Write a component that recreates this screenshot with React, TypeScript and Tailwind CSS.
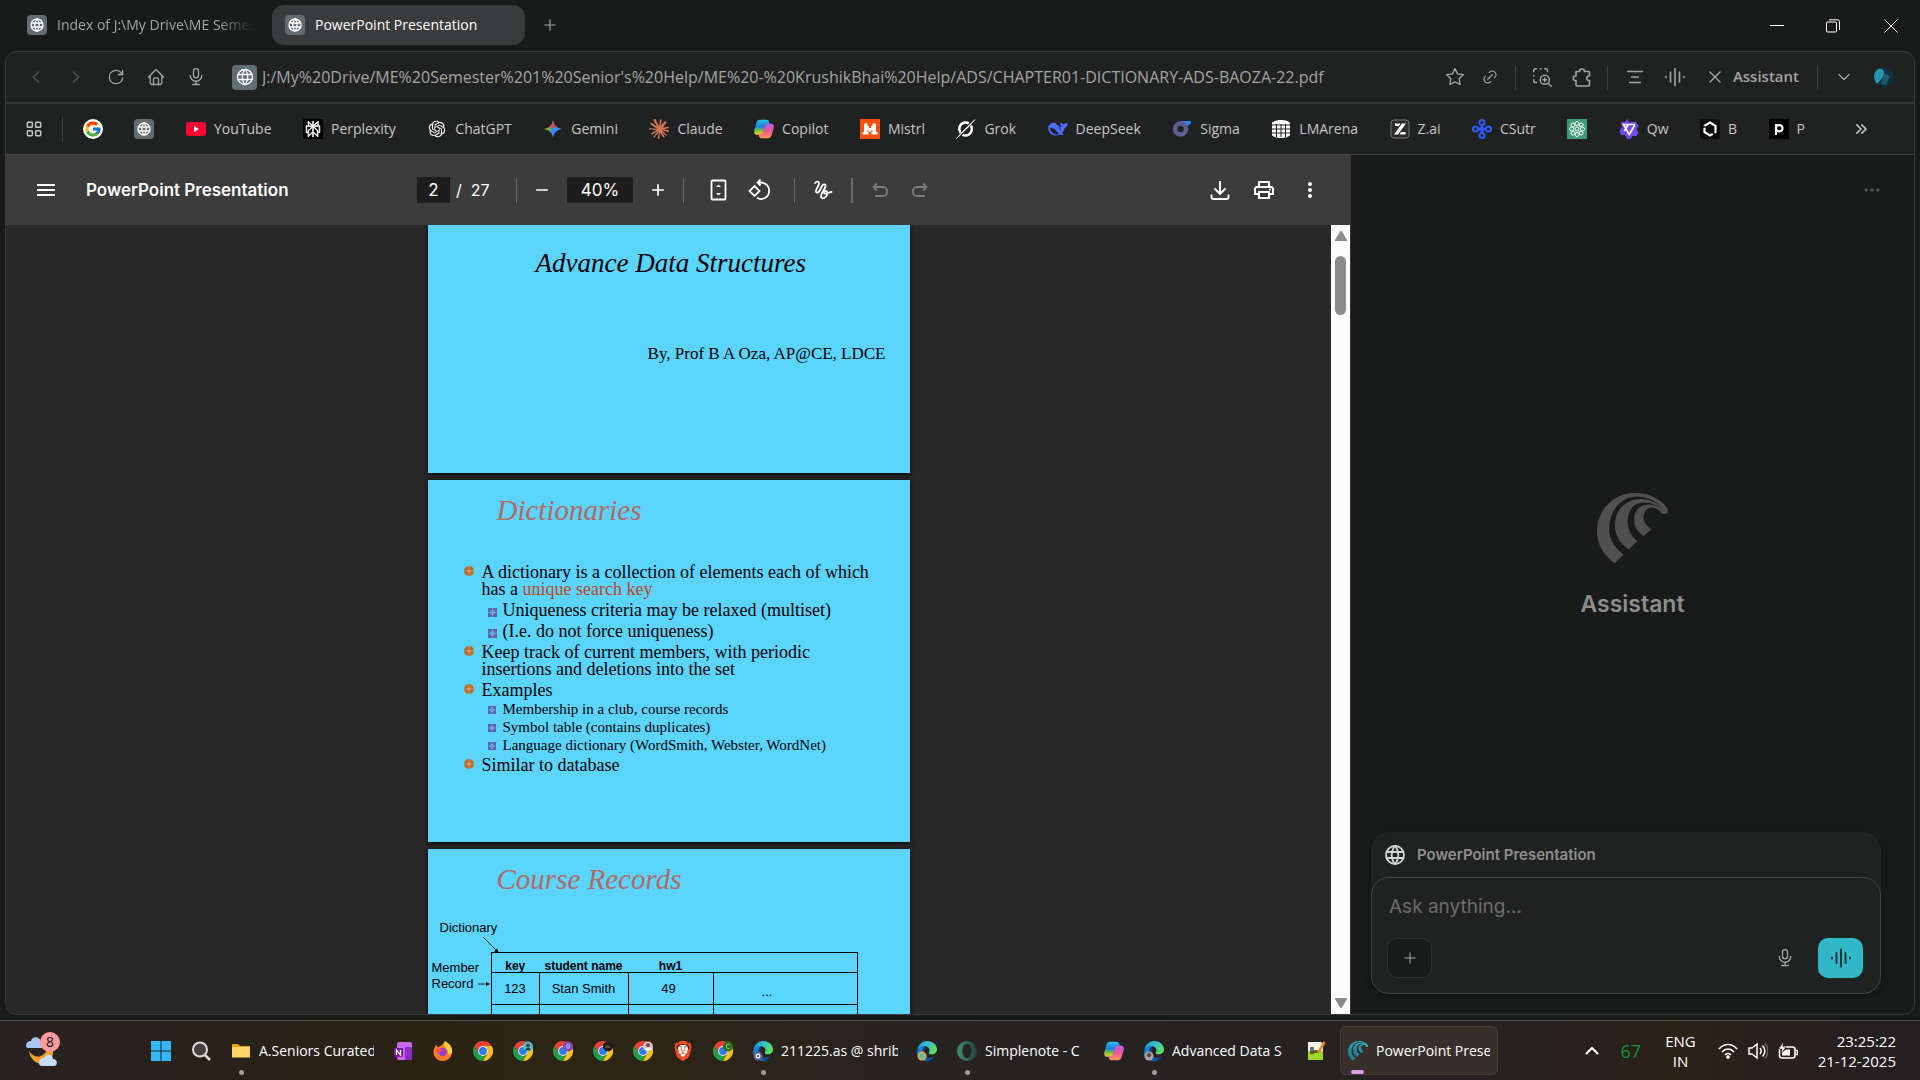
import type { ReactNode } from "react";
import { clsx } from "clsx";
import { FcGoogle } from "react-icons/fc";
import { MdAdd, MdMenu, MdMoreVert, MdOutlinePrint, MdRemove } from "react-icons/md";
import { RiOpenaiFill } from "react-icons/ri";
import { SiBrave, SiClaude, SiPerplexity } from "react-icons/si";
import {
  TbChevronDown, TbChevronLeft, TbChevronRight, TbChevronsRight, TbDots, TbHome, TbLayoutGrid, TbLink,
  TbMicrophone, TbPlus, TbReload, TbStar, TbWorld, TbX, TbZoomInArea,
} from "react-icons/tb";

const UI = "font-['Open_Sans','Noto_Sans',sans-serif]";
const GROTESK = "font-['Inter','Liberation_Sans',sans-serif]";
const SERIF = "font-['Liberation_Serif',serif]";
const ARIAL = "font-['Liberation_Sans',sans-serif]";

function GlobeTile({ size = "size-5" }: { size?: string }) {
  return (
    <span className={clsx(size, "flex shrink-0 items-center justify-center rounded bg-[#626c73] text-white")}>
      <TbWorld className="size-4/5" strokeWidth={2} />
    </span>
  );
}

function Wave({ className }: { className?: string }) {
  return (
    <svg viewBox="0 0 20 20" className={className} stroke="currentColor" strokeWidth="1.8" strokeLinecap="round" fill="none">
      <path d="M1 9.500v1M5.500 5v10M10 1.500v17M14.500 5v10M19 9.500v1" />
    </svg>
  );
}

function CometMark({ className, fill = "currentColor" }: { className?: string; fill?: string }) {
  return (
    <svg viewBox="0 0 71 71" className={className} fill={fill}>
      <defs>
        <linearGradient id="comet" x1="0" y1="1" x2="1" y2="0">
          <stop offset="0" stopColor="#1d6f86" />
          <stop offset="1" stopColor="#39c6d8" />
        </linearGradient>
      </defs>
      <path d="M17.8 70.4C6 62 0 50 0 39 0 16 17 0 38 0c15 0 25 6 31.500 14 2.500 3 1.500 7-2 7-1.500 0-2.500-1-3.500-2l.5-5C58 7 49 3.500 40 3.500 24 3.500 12.200 18 12.200 36c0 11 5.800 19 14.400 25.400z" />
      <path d="M31.800 56.400C22 50 17.800 41 17.800 32 17.800 17 29 6 43.700 6 52 6 59 9 65 14.500l-.5 1C59 11.500 53 9.600 47 9.600 37 9.600 30.700 17 30.700 28c0 9 3.300 15 9.600 19.900z" />
      <path d="M46.600 43.200C40 38.500 37 33 37 26.800c0-9.300 6-15.400 14.500-15.400 5.500 0 9.500 1.600 13.500 4.600l3 5c-1 0-3-.5-4-1.500-2.500-3-5.500-4.900-9-4.900-5 0-8.400 3.900-8.400 9.900 0 5 2.900 8.500 7.800 11.600z" />
    </svg>
  );
}

function CopilotMark({ className }: { className?: string }) {
  return (
    <svg viewBox="0 0 24 24" className={className}>
      <defs>
        <linearGradient id="cpA" x1="0" y1="0" x2="0" y2="1">
          <stop offset="0" stopColor="#2cc3e8" /><stop offset=".45" stopColor="#1d7fe0" />
          <stop offset=".7" stopColor="#6fc04c" /><stop offset="1" stopColor="#f7d21e" />
        </linearGradient>
        <linearGradient id="cpB" x1="0" y1="0" x2="0" y2="1">
          <stop offset="0" stopColor="#b45ce8" /><stop offset=".5" stopColor="#f0569a" /><stop offset="1" stopColor="#ff9a5a" />
        </linearGradient>
      </defs>
      <path d="M7 1h8c2 0 2.600 1 3.200 3l.8 2.500h-3c-1.500 0-2.200.8-2.600 2L11 16c-.7 2-1.500 3-3.500 3H4c-3 0-4.500-2-3.500-6L3 4.500C3.800 2 5 1 7 1z" fill="url(#cpA)" />
      <path d="M17 23H9c-2 0-2.600-1-3.200-3L5 18h3c1.500 0 2.200-.8 2.600-2L13 8.500c.7-2 1.500-3 3.500-3H20c3 0 4.500 2 3.500 6L21 19.500c-.8 2.500-2 3.500-4 3.500z" fill="url(#cpB)" />
    </svg>
  );
}

function ChromeMark({ badge }: { badge?: ReactNode }) {
  return (
    <svg viewBox="0 0 48 48" className="size-5">
      <path d="M24 12h20.800A24 24 0 0 0 3.200 12l10.400 18A12 12 0 0 1 24 12z" fill="#ea4335" />
      <path d="M13.600 30 3.200 12A24 24 0 0 0 24 48l10.400-18a12 12 0 0 1-20.800 0z" fill="#1f9d48" />
      <path d="M34.400 30 24 48a24 24 0 0 0 20.800-36H24a12 12 0 0 1 10.400 18z" fill="#fbc116" />
      <circle cx="24" cy="24" r="12" fill="#fff" />
      <circle cx="24" cy="24" r="9.500" fill="#2f7bea" />
      {badge}
    </svg>
  );
}

function EdgeMark({ badge }: { badge?: ReactNode }) {
  return (
    <svg viewBox="0 0 24 24" className="size-5 shrink-0">
      <defs>
        <linearGradient id="edgeTop" x1="0" y1=".2" x2="1" y2=".6">
          <stop offset="0" stopColor="#1b9de2" /><stop offset=".5" stopColor="#35c1c9" /><stop offset="1" stopColor="#66e04f" />
        </linearGradient>
      </defs>
      <path d="M1 11C1 5 6 5 10 7c-3 1-4 4-4 7 0 6 6 9 10 9-1 .7-2.500 1-4 1C5 24 0 19 0 13z" fill="#1382d6" />
      <path d="M10 8c-2 2-2 6 0 9s7 4 11 1c-2 4-5 6-8 5.500-4 0-7.500-4-7.500-8C5.500 12 7 9 10 8z" fill="#0c4f9c" />
      <path d="M.5 11C1.500 4 7 0 12 0c7 0 12 5 12 10 0 4-3 6-6 6s-4-1-4-2 1-1 1-3c0-3-3-5-7-5-4 0-6.500 2-7.500 5z" fill="url(#edgeTop)" />
      {badge}
    </svg>
  );
}

const marks = {
  youtube: (
    <svg viewBox="0 0 20 20" className="size-5"><rect y="3" width="20" height="14" rx="3" fill="#ff0033" /><path d="M8 7v6l5-3z" fill="#fff" /></svg>
  ),
  perplexity: <span className="flex size-5 items-center justify-center bg-black text-white"><SiPerplexity className="size-4" stroke="#fff" strokeWidth={1} /></span>,
  gemini: (
    <svg viewBox="0 0 20 20" className="size-5">
      <defs>
        <linearGradient id="gem" x1="0" y1=".4" x2="1" y2=".5">
          <stop offset="0" stopColor="#f5c51c" /><stop offset=".35" stopColor="#4aa86a" /><stop offset=".5" stopColor="#3f86f5" /><stop offset="1" stopColor="#4a8af8" />
        </linearGradient>
      </defs>
      <path d="M10 1c.8 5 3.500 8.200 9 9-5.500.8-8.200 4-9 9-.8-5-3.500-8.200-9-9 5.500-.8 8.200-4 9-9z" fill="url(#gem)" />
      <path d="M10 1c.6 3.500 1.800 5.500 3.600 7L10 9 6.400 8C8.200 6.500 9.400 4.500 10 1z" fill="#ea4335" opacity=".85" />
    </svg>
  ),
  mistral: (
    <svg viewBox="0 0 20 20" className="size-5"><rect width="20" height="20" fill="#fa500f" /><path d="M4 4.500h3.500V7H9v2h2V7h1.500V4.500H16v8.500h1.500v2.500h-6V13h1v-1.500H11V13H9v-1.500H7.500V13h1v2.500h-6V13H4z" fill="#fff" /></svg>
  ),
  grok: (
    <svg viewBox="0 0 20 20" className="size-5" fill="none" stroke="#fff">
      <path d="M15 6.500c2.500 5-1 10-5.500 10-1.200 0-2.200-.3-3-.8M4.500 14C1.500 9 4.500 3.500 9.500 3.500c1.300 0 2.500.4 3.300 1" strokeWidth="2.400" /><path d="M.5 19.500 6.500 12.500 19 .5 13 7.500z" fill="#fff" strokeWidth=".6" />
    </svg>
  ),
  deepseek: (
    <svg viewBox="0 0 20 20" className="size-5" fill="#4d6bfe">
      <path d="M.3 9.500C.3 5.500 3 3.500 6 4l1.500-.5c0 1 .8 1.700 2 2.500l3 2.500c.8 0 .8-1.500 0-3-.4-1 0-2 .8-2.300.4 1.300 1.300 2 2.700 1.700 1-.6 2.500-1 3.700-1.200 0 3-1.200 4.800-3.200 5.600-.3 2-1 3.500-2.300 4.700l1.500 1.500c-1.500.8-3 .7-4.200 0C6 18 .3 15 .3 9.500z" />
      <path d="M2.500 9c3-.5 5 1.500 8 6-3 1-8-1.500-8-6zM10.500 8.500c1.200 0 2 .8 2 2" fill="#202222" stroke="#202222" strokeWidth=".5" />
    </svg>
  ),
  sigma: (
    <svg viewBox="0 0 20 20" className="size-5"><path d="M8 2h11c0 3-1.500 4.500-4 4.500z" fill="#3b82f6" /><circle cx="8.500" cy="10" r="5.500" fill="none" stroke="#5b5e93" strokeWidth="4.500" /></svg>
  ),
  lmarena: (
    <svg viewBox="0 0 20 20" className="size-5"><path d="M1 4c2-4 16-4 18 0v12c-2 4-16 4-18 0z" fill="#fff" /><path d="M1 6h18M1 10h18M1 14h18M5.500 5v13M10 5v13M14.500 5v13" stroke="#202222" strokeWidth="1" /></svg>
  ),
  zai: (
    <svg viewBox="0 0 20 20" className="size-5"><rect x="1" y="1" width="18" height="18" rx="3" fill="#2d2d2d" stroke="#777" /><path d="M5 4.500h5.500L9 7H5zM16 4.500 8 15.500H4l8-11zM15.500 15.500h-6L11 13h4.500z" fill="#fff" /></svg>
  ),
  csutr: (
    <svg viewBox="0 0 20 20" className="size-5" fill="none" stroke="#2f5bff" strokeWidth="2">
      <circle cx="10" cy="3.500" r="2.500" /><circle cx="10" cy="16.500" r="2.500" /><circle cx="3.500" cy="10" r="2.500" /><circle cx="16.500" cy="10" r="2.500" />
      <path d="M10 6c0 2.500-1.500 4-4 4 2.500 0 4 1.500 4 4 0-2.500 1.500-4 4-4-2.500 0-4-1.500-4-4z" />
    </svg>
  ),
  atom: (
    <svg viewBox="0 0 20 20" className="size-5"><rect width="20" height="20" fill="#3d9c78" />
      <g fill="none" stroke="#fff" strokeWidth="1">
        <circle cx="10" cy="4.500" r="2" /><circle cx="10" cy="15.500" r="2" /><circle cx="4.500" cy="10" r="2" /><circle cx="15.500" cy="10" r="2" />
        <circle cx="6" cy="6" r="2" /><circle cx="14" cy="6" r="2" /><circle cx="6" cy="14" r="2" /><circle cx="14" cy="14" r="2" /><circle cx="10" cy="10" r="2" />
      </g>
    </svg>
  ),
  qwen: (
    <svg viewBox="0 0 20 20" className="size-5"><path d="m8 0 2 3h7l2.500 4-2 3 2 4-2 3h-4l-2 3H8l-2-4H2L.5 12l3-5-2-3 2-1h3z" fill="#6c4df2" /><path d="M3.500 5.500h12.500M4.500 5.500l6 10.500M15.500 6.500l-5.500 9.500M5.500 12 9 6" fill="none" stroke="#fff" strokeWidth="1.600" /></svg>
  ),
  hex: (
    <svg viewBox="0 0 20 20" className="size-5"><rect width="20" height="20" rx="3" fill="#0c0c0c" /><path d="m10 3.500 5.500 3.300v6.400L10 16.500l-5.500-3.300V6.800z" fill="none" stroke="#fff" strokeWidth="2.200" strokeDasharray="14 2" /></svg>
  ),
  pmark: (
    <svg viewBox="0 0 20 20" className="size-5"><rect width="20" height="20" fill="#000" /><path d="M7 16V5M7 9c0-4 6.500-4 6.500.3s-6.500 4-6.500 0" fill="none" stroke="#fff" strokeWidth="2.200" /></svg>
  ),
};

const bookmarks: { label?: string; title?: string; icon: ReactNode }[] = [
  { title: "Google", icon: <span className="flex size-5 items-center justify-center rounded-full bg-white"><FcGoogle className="size-[18px]" /></span> },
  { title: "Site", icon: <GlobeTile /> },
  { label: "YouTube", icon: marks.youtube },
  { label: "Perplexity", icon: marks.perplexity },
  { label: "ChatGPT", icon: <RiOpenaiFill className="size-5 text-white" /> },
  { label: "Gemini", icon: marks.gemini },
  { label: "Claude", icon: <SiClaude className="size-5 text-[#d97757]" /> },
  { label: "Copilot", icon: <CopilotMark className="size-5" /> },
  { label: "Mistrl", icon: marks.mistral },
  { label: "Grok", icon: marks.grok },
  { label: "DeepSeek", icon: marks.deepseek },
  { label: "Sigma", icon: marks.sigma },
  { label: "LMArena", icon: marks.lmarena },
  { label: "Z.ai", icon: marks.zai },
  { label: "CSutr", icon: marks.csutr },
  { title: "Atom", icon: marks.atom },
  { label: "Qw", icon: marks.qwen },
  { label: "B", icon: marks.hex },
  { label: "P", icon: marks.pmark },
];

function TabStrip() {
  return (
    <header className="flex h-[51px] shrink-0 items-center">
      <div role="tablist" className="flex items-center pb-px">
        <button role="tab" aria-selected={false} className="ml-[14px] flex h-10 w-[252px] items-center gap-[10px] rounded-xl px-[13px] text-[#a3a5a5]">
          <GlobeTile />
          <span className="flex-1 overflow-hidden text-left whitespace-nowrap [mask-image:linear-gradient(to_right,#000_82%,transparent)]">Index of J:\My Drive\ME Semester</span>
        </button>
        <button role="tab" aria-selected className="ml-[6px] flex h-10 w-[253px] items-center gap-[10px] rounded-xl bg-[#393b3c] px-[13px] text-white">
          <GlobeTile />
          <span>PowerPoint Presentation</span>
        </button>
        <button aria-label="New tab" className="ml-4 text-[#a3a5a5]"><TbPlus className="size-[18px]" strokeWidth={1.5} /></button>
      </div>
      <div className="ml-auto flex text-white">
        <button aria-label="Minimize" className="flex w-14 justify-center"><svg viewBox="0 0 14 14" className="size-[14px]" stroke="currentColor"><path d="M0 6.500h14" /></svg></button>
        <button aria-label="Restore" className="flex w-14 justify-center"><svg viewBox="0 0 14 14" className="size-[14px]" stroke="currentColor" fill="none"><rect x=".5" y="3" width="10" height="10" rx="1" /><path d="M3 .8h8.500a2 2 0 0 1 2 2V11" /></svg></button>
        <button aria-label="Close" className="flex w-[59px] justify-center"><svg viewBox="0 0 14 14" className="size-[14px]" stroke="currentColor"><path d="m.5.5 13 13M13.500.5l-13 13" /></svg></button>
      </div>
    </header>
  );
}

function ToolButton({ label, dim, children }: { label: string; dim?: boolean; children: ReactNode }) {
  return (
    <button aria-label={label} className={clsx("flex h-10 w-10 shrink-0 items-center justify-center", dim ? "text-[#555858]" : "text-[#a3a5a5]")}>
      {children}
    </button>
  );
}

const Divider = () => <span className="h-[25px] w-px shrink-0 bg-[#3f4141]" />;

function AddressBar() {
  return (
    <div className="flex h-[52px] shrink-0 items-center border-b-2 border-[#383a3a] pl-[10px] [&_svg]:[stroke-width:1.6]">
      <ToolButton label="Back" dim><TbChevronLeft className="size-5" /></ToolButton>
      <ToolButton label="Forward" dim><TbChevronRight className="size-5" /></ToolButton>
      <ToolButton label="Reload"><TbReload className="size-5" /></ToolButton>
      <ToolButton label="Home"><TbHome className="size-5" /></ToolButton>
      <ToolButton label="Voice"><TbMicrophone className="size-5" /></ToolButton>
      <div className="ml-4 flex min-w-0 flex-1 items-center gap-[5px]">
        <GlobeTile size="size-[25px]" />
        <input aria-label="Address" readOnly className="min-w-0 flex-1 bg-transparent text-base text-[#a3a5a5] outline-none" value="J:/My%20Drive/ME%20Semester%201%20Senior's%20Help/ME%20-%20KrushikBhai%20Help/ADS/CHAPTER01-DICTIONARY-ADS-BAOZA-22.pdf" />
      </div>
      <div className="flex items-center gap-4 pr-4 text-[#a3a5a5]">
        <button aria-label="Bookmark"><TbStar className="size-5" /></button>
        <button aria-label="Copy link"><TbLink className="size-[18px]" /></button>
      </div>
      <Divider />
      <span className="w-[6px]" />
      <ToolButton label="Search area"><TbZoomInArea className="size-[22px]" /></ToolButton>
      <ToolButton label="Extensions">
        <svg viewBox="0 0 20 20" className="size-5" fill="none" stroke="currentColor" strokeLinejoin="round"><path d="M4 4.500h3.500a2.500 2.500 0 1 1 5 0h4a1 1 0 0 1 1 1v3.500a2.300 2.300 0 1 0 0 4.500V18a1 1 0 0 1-1 1H5a1 1 0 0 1-1-1v-4.500a2.300 2.300 0 1 1 0-4.500z" /></svg>
      </ToolButton>
      <span className="w-[5px]" />
      <Divider />
      <span className="w-[7px]" />
      <ToolButton label="Summarize"><svg viewBox="0 0 16 14" className="h-[14px] w-4" stroke="currentColor"><path d="M0 1.500h16M4 7h8M2 12.500h12" /></svg></ToolButton>
      <ToolButton label="Voice mode"><Wave className="size-5" /></ToolButton>
      <button className="flex items-center gap-2 pr-[18px] pl-[10px] text-[15px] font-semibold text-[#a3a5a5]"><TbX className="size-5" />Assistant</button>
      <Divider />
      <span className="w-[6px]" />
      <ToolButton label="More"><TbChevronDown className="size-5" /></ToolButton>
      <button aria-label="Profile" className="mr-5 ml-[10px]">
        <svg viewBox="0 0 20 20" className="size-5"><circle cx="10" cy="10" r="10" fill="#12303b" /><path d="M4 2c5-1 7 2 6 7l-7 8C-1 12-1 5 4 2z" fill="#2596ab" /><path d="m10 6 6 3-4 9-5-1z" fill="#1a5a6b" /></svg>
      </button>
    </div>
  );
}

function BookmarkBar() {
  return (
    <nav className="flex h-[51px] shrink-0 items-center border-b border-[#434545] pl-[18px] text-[#c4c6c6]">
      <button aria-label="Apps"><TbLayoutGrid className="size-5" strokeWidth={1.8} /></button>
      <span className="mr-5 ml-[18px] h-[25px] w-px bg-[#3f4141]" />
      <div className="flex flex-1 items-center justify-between">
        {bookmarks.map(b => (
          <a key={b.label ?? b.title} href="#" aria-label={b.label ?? b.title} className="flex items-center gap-2 whitespace-nowrap">
            {b.icon}{b.label && <span>{b.label}</span>}
          </a>
        ))}
      </div>
      <button aria-label="More bookmarks" className="mr-[43px] ml-[46px]"><TbChevronsRight className="size-5" /></button>
    </nav>
  );
}

const PdfDivider = () => <span className="h-[25px] w-px shrink-0 bg-[#6b6b6b]" />;

function PdfToolbar() {
  return (
    <div className={clsx("flex h-[70px] shrink-0 items-center bg-[#3c3c3c] pl-[28px] text-white", GROTESK)}>
      <button aria-label="Menu"><MdMenu className="size-6" /></button>
      <h1 className="ml-[28px] w-[331px] text-[17px] font-semibold">PowerPoint Presentation</h1>
      <input aria-label="Page" defaultValue="2" className="h-[26px] w-[33px] bg-[#1d1d1d] text-center text-[17px] outline-none" />
      <span className="ml-[6px] w-[60px] text-base">/&nbsp; 27</span>
      <PdfDivider />
      <button aria-label="Zoom out" className="flex w-[50px] justify-center"><MdRemove className="size-5" /></button>
      <input aria-label="Zoom" defaultValue="40%" className="h-[26px] w-[66px] bg-[#1d1d1d] text-center text-[17px] outline-none" />
      <button aria-label="Zoom in" className="flex w-[50px] justify-center"><MdAdd className="size-5" /></button>
      <PdfDivider />
      <div className="flex w-[110px] justify-center gap-5">
        <button aria-label="Fit to page">
          <svg viewBox="0 0 20 22" className="h-[22px] w-5" fill="none" stroke="currentColor" strokeWidth="1.800"><rect x="3.500" y="1.500" width="14" height="19" rx="1" /><path d="m8 8 2.500-2.500L13 8zM8 14l2.500 2.500L13 14z" fill="currentColor" stroke="none" /></svg>
        </button>
        <button aria-label="Rotate">
          <svg viewBox="0 0 22 22" className="size-[22px]" fill="none" stroke="currentColor" strokeWidth="1.800"><path d="m6.500 7 5 5-5 5-5-5zM9.500 3.500H13a8.200 8.200 0 0 1 0 16.500c-1.500 0-2.800-.4-4-1.200M12.500.5l-3 3 3 3" /></svg>
        </button>
      </div>
      <PdfDivider />
      <button aria-label="Draw" className="flex w-14 justify-center">
        <svg viewBox="0 0 20 20" className="size-5" fill="none" stroke="currentColor" strokeWidth="1.800" strokeLinecap="round"><path d="M2 3C3.500 1 6 1 6 3.500S2.500 9 3 11.500c.5 2 2.500 1.500 4-1.500l2-4c1.200-2.300 4-2 3.500.5-.5 3-4.500 6-4.500 9.500 0 2.800 3 3 5 .5s2-5.500-.5-5.500-2.500 2.500 0 2.500 3.500-1 6-1.500" /></svg>
      </button>
      <span className="h-[25px] w-[2px] shrink-0 bg-[#6b6b6b]" />
      <div className="ml-[17px] flex gap-5 text-[#7b7b7b]">
        <button aria-label="Undo"><svg viewBox="0 0 20 20" className="size-5" fill="none" stroke="currentColor" strokeWidth="1.800"><path d="M7 3.500 3.500 7 7 10.500M3.500 7H13a4 4 0 0 1 4 4v1a4 4 0 0 1-4 4H5" /></svg></button>
        <button aria-label="Redo"><svg viewBox="0 0 20 20" className="size-5" fill="none" stroke="currentColor" strokeWidth="1.800"><path d="M13 3.500 16.500 7 13 10.500M16.500 7H7a4 4 0 0 0-4 4v1a4 4 0 0 0 4 4h8" /></svg></button>
      </div>
      <div className="mr-[28px] ml-auto flex items-center gap-[22px]">
        <button aria-label="Download"><svg viewBox="0 0 20 20" className="size-5" fill="none" stroke="currentColor" strokeWidth="1.900"><path d="M10 1v13M4.500 8.500 10 14l5.500-5.500M1.500 14.500V17a2 2 0 0 0 2 2h13a2 2 0 0 0 2-2v-2.500" /></svg></button>
        <button aria-label="Print"><MdOutlinePrint className="size-6" /></button>
        <button aria-label="More actions"><MdMoreVert className="size-6" /></button>
      </div>
    </div>
  );
}

function Bullet({ size }: { size: "lg" | "md" | "sm" }) {
  if (size === "lg") {
    return <svg viewBox="0 0 10 10" className="mt-[2px] size-[10px] shrink-0"><circle cx="5" cy="5" r="5" fill="#c8691c" /><path d="M5 0v10M0 5h10" stroke="#5bd4ff" strokeWidth=".5" /><circle cx="5" cy="5" r="1.500" fill="#e9a45c" /></svg>;
  }
  return (
    <svg viewBox="0 0 9 9" className={clsx("shrink-0", size === "md" ? "mt-[6px] mr-[1px] size-[9px]" : "mt-[5px] mr-[2px] size-2")}>
      <rect width="9" height="9" fill="#5f63a8" /><path d="M4.500 0v9M0 4.500h9" stroke="#5bd4ff" strokeWidth=".5" /><circle cx="4.500" cy="4.500" r="1.800" fill="none" stroke="#8ed0f5" strokeWidth=".7" />
    </svg>
  );
}

function Slide({ className, children }: { className?: string; children: ReactNode }) {
  return <section className={clsx("w-[482px] shrink-0 bg-[#5bd4ff] text-black shadow-[0_1px_4px_#000]", className)}>{children}</section>;
}

function SlideTitle({ children }: { children: ReactNode }) {
  return <h2 className={clsx("ml-[69px] pt-3 text-[29px] leading-9 text-[#b46a62] italic", SERIF)}>{children}</h2>;
}

function Item({ children }: { children: ReactNode }) {
  return <li className="mt-1 flex gap-2 text-lg leading-[17px]"><Bullet size="lg" /><div className="whitespace-nowrap">{children}</div></li>;
}

function Slides() {
  return (
    <div className="flex min-w-0 flex-1 flex-col items-center gap-[7px] overflow-hidden">
      <Slide className={clsx("h-[248px]", SERIF)}>
        <h2 className="ml-[108px] pt-[22px] text-[27px] leading-8 italic">Advance Data Structures</h2>
        <p className="mt-[65px] pr-6 text-right text-[17px] leading-5">By, Prof B A Oza, AP@CE, LDCE</p>
      </Slide>
      <Slide className="h-[362px]">
        <SlideTitle>Dictionaries</SlideTitle>
        <ul className={clsx("mt-9 pr-5 pl-9", SERIF)}>
          <Item>A dictionary is a collection of elements each of which<br />has a <span className="text-[#c0451f]">unique search key</span></Item>
          {["Uniqueness criteria may be relaxed (multiset)", "(I.e. do not force uniqueness)"].map(t => (
            <li key={t} className="mt-1 ml-6 flex gap-[5px] text-lg leading-[17px]"><Bullet size="md" />{t}</li>
          ))}
          <Item>Keep track of current members, with periodic<br />insertions and deletions into the set</Item>
          <Item>Examples</Item>
          {["Membership in a club, course records", "Symbol table (contains duplicates)", "Language dictionary (WordSmith, Webster, WordNet)"].map(t => (
            <li key={t} className="mt-[2px] ml-6 flex gap-[5px] text-[15px] leading-4"><Bullet size="sm" />{t}</li>
          ))}
          <Item>Similar to database</Item>
        </ul>
      </Slide>
      <Slide className="h-[362px]">
        <SlideTitle>Course Records</SlideTitle>
        <div className={clsx("relative text-[13px] leading-4", ARIAL)}>
          <p className="pt-[23px] pl-3">Dictionary</p>
          <svg viewBox="0 0 20 18" className="absolute top-[39px] left-[54px] h-[18px] w-5"><path d="m1 1 15 15" stroke="#000" strokeWidth=".8" /><path d="m17 17-5-1.500 3-3z" /></svg>
          <div className="mt-4 flex">
            <div className="w-[63px] pt-2 pl-1">
              Member
              <div className="flex items-center gap-[5px]">Record<svg viewBox="0 0 12 6" className="h-[6px] w-3"><path d="M0 3h9" stroke="#000" strokeWidth=".8" /><path d="M12 3 8 1v4z" /></svg></div>
            </div>
            <table className="w-[367px] table-fixed border-collapse border border-black">
              <colgroup><col className="w-12" /><col className="w-[89px]" /><col className="w-[85px]" /><col /></colgroup>
              <thead>
                <tr className="h-5 text-xs leading-3"><th className="p-0 align-bottom">key</th><th className="p-0 align-bottom">student name</th><th className="p-0 align-bottom">hw1</th><th /></tr>
              </thead>
              <tbody>
                <tr className="h-8 text-center">
                  <td className="border border-black p-0">123</td><td className="border border-black p-0">Stan Smith</td><td className="border border-black p-0 pr-1">49</td><td className="border border-black p-0 pr-9 pb-1 align-bottom">...</td>
                </tr>
                <tr className="h-8"><td className="border border-black" /><td className="border border-black" /><td className="border border-black" /><td className="border border-black" /></tr>
              </tbody>
            </table>
          </div>
        </div>
      </Slide>
    </div>
  );
}

function Scrollbar() {
  return (
    <div className="flex w-[19px] shrink-0 flex-col items-center bg-[#fcfcfc] py-[6px]">
      <svg viewBox="0 0 12 10" className="h-[10px] w-3"><path d="M6 0c.5 0 1 .4 1.300 1L12 9c.2.600 0 1-.6 1H.6C0 10-.2 9.600 0 9l4.700-8C5 .4 5.500 0 6 0z" fill="#8b8b8b" /></svg>
      <div className="mt-[15px] h-[59px] w-[11px] rounded-full bg-[#8b8b8b]" />
      <svg viewBox="0 0 12 10" className="mt-auto h-[10px] w-3 rotate-180"><path d="M6 0c.5 0 1 .4 1.300 1L12 9c.2.600 0 1-.6 1H.6C0 10-.2 9.600 0 9l4.700-8C5 .4 5.500 0 6 0z" fill="#8b8b8b" /></svg>
    </div>
  );
}

function AssistantPanel() {
  return (
    <aside className={clsx("flex w-[564px] shrink-0 flex-col border-l border-[#343636] bg-[#191b1a]", GROTESK)}>
      <div className="flex h-[70px] shrink-0 items-center justify-end pr-8 text-[#555757]">
        <button aria-label="Panel menu"><TbDots className="size-5" /></button>
      </div>
      <div className="flex flex-1 flex-col items-center justify-center pt-14">
        <CometMark className="mb-6 size-[71px] text-[#50504f]" />
        <p className="text-[23px] leading-8 font-semibold text-[#8d8f8e]">Assistant</p>
      </div>
      <div className="mr-[33px] mb-5 ml-5 rounded-[18px] bg-[#202222] shadow-[0_2px_10px_#0005]">
        <div className="flex h-[45px] items-center gap-[10px] pl-3 text-[#8d8f8e]">
          <TbWorld className="size-6 text-[#d4d6d6]" strokeWidth={1.8} />
          <span className="text-[15px] font-semibold">PowerPoint Presentation</span>
        </div>
        <div className="flex flex-col rounded-[18px] border border-[#434545] p-[15px]">
          <textarea aria-label="Ask anything" rows={1} placeholder="Ask anything…" className="ml-[2px] h-[45px] resize-none bg-transparent text-[19px] leading-7 text-white outline-none placeholder:text-[#6b6d6c]" />
          <div className="flex items-center">
            <button aria-label="Attach" className="flex h-10 w-[45px] items-center justify-center rounded-[10px] border border-[#2e3030] bg-[#191b1a] text-[#a3a5a5]"><TbPlus className="size-[18px]" strokeWidth={1.4} /></button>
            <button aria-label="Dictate" className="mr-[23px] ml-auto text-[#a3a5a5]"><TbMicrophone className="size-5" strokeWidth={1.6} /></button>
            <button aria-label="Voice mode" className="mr-[2px] flex h-10 w-[45px] items-center justify-center rounded-[10px] bg-[#31b8c6] text-[#10282b]"><Wave className="size-5" /></button>
          </div>
        </div>
      </div>
    </aside>
  );
}

function TaskItem({ label, icon, width, running, active }: { label?: string; icon: ReactNode; width?: string; running?: boolean; active?: boolean }) {
  return (
    <button
      aria-label={label ?? "App"}
      className={clsx(
        "relative flex h-[49px] shrink-0 items-center",
        label ? width : "w-10 justify-center",
        active ? "mx-1 rounded-md border border-[#453d38] bg-[#37302a] px-[7px]" : label && "pr-[9px] pl-[10px]",
      )}
    >
      {icon}
      {label && <span className="ml-2 min-w-0 flex-1 overflow-hidden text-left whitespace-nowrap">{label}</span>}
      {running && <span className="absolute bottom-0 left-[18px] size-[5px] rounded-full bg-[#a0a0a0]" />}
      {active && <span className="absolute bottom-0 left-[10px] h-1 w-[13px] rounded-full bg-[#dc9fe6]" />}
    </button>
  );
}

function Taskbar() {
  return (
    <footer className="flex h-[60px] shrink-0 items-center border-t border-[#4a4746] bg-[linear-gradient(to_right,#272222,#292216_18%,#2d2413_32%,#272322_48%,#262222_80%,#2b2117_87%,#242021_98%)] text-white">
      <button aria-label="Weather" className="ml-6 w-[117px]">
        <svg viewBox="0 0 40 40" className="size-10">
          <path d="M5 20c4 6 10 8 16 2 3-4 4-8 2-12 8 5 8 16 1 21-7 4-17 1-19-11z" fill="#f0a030" />
          <path d="M2 15c0-4 3-5 5-5 1-5 9-5 10 1 3 0 4 6 0 6H4c-1 0-2-1-2-2z" fill="#a9c6f3" />
          <path d="M15 32c0-4 3-5 5-5 2-5 9-4 9 1 5 0 5 7 1 7H18c-2 0-3-1-3-3z" fill="#c8dcfb" />
          <circle cx="26" cy="11" r="10" fill="#ff99a0" />
          <text x="26" y="16" textAnchor="middle" fontSize="14" fill="#111">8</text>
        </svg>
      </button>
      <TaskItem icon={<svg viewBox="0 0 20 20" className="size-5"><path d="M0 0h9.500v9.500H0zM10.500 0H20v9.500h-9.500zM0 10.500h9.500V20H0zM10.500 10.500H20V20h-9.500z" fill="#33b8fb" /></svg>} />
      <TaskItem icon={<svg viewBox="0 0 20 20" className="size-5" fill="none" stroke="#dcdcdc" strokeWidth="2"><circle cx="9" cy="8.500" r="7" fill="#45413f" /><path d="m14 14 5 5" strokeWidth="2.500" /></svg>} />
      <TaskItem label="A.Seniors Curated" width="w-[162px]" running icon={<svg viewBox="0 0 20 20" className="size-5 shrink-0"><path d="M1 3h6l2 2h10v3H1z" fill="#e8a317" /><path d="M1 6h18v10.500H1z" fill="#ffd766" /></svg>} />
      <TaskItem icon={<svg viewBox="0 0 20 20" className="size-5"><rect x="4" y="1" width="15" height="18" rx="2" fill="#c768ea" /><path d="M12 6h7v12l-2 1h-5z" fill="#8b2fc4" /><rect x="1" y="7" width="9" height="9" rx="1" fill="#7719aa" /><path d="M3.500 14V9l4 5V9" stroke="#fff" strokeWidth="1.300" fill="none" /></svg>} />
      <TaskItem icon={<svg viewBox="0 0 20 20" className="size-5"><path d="M12 0c5 3 8 7 7 12-1 5-5 8-9 8-6 0-10-5-9.500-10C1 7 2 5 3.500 3.500c0 1 .5 2 1 2.500C7 6 9 4 12 0z" fill="#ff7a22" /><path d="M12 0c5 3 8 7 7 12l-4 2c1-5-2-7-4-9z" fill="#ffd23c" /><circle cx="9.500" cy="11" r="4.200" fill="#8a3fe0" /><path d="M3 9c2-2 4-1 7 0-1 2-4 2-5 4-1-1-2-3-2-4z" fill="#ff4a4a" /></svg>} />
      <TaskItem icon={<ChromeMark />} />
      <TaskItem icon={<ChromeMark badge={<g><circle cx="36" cy="13" r="12" fill="#46c4cf" /><circle cx="36" cy="11" r="5" fill="#6b4433" /><path d="M29 22c2-7 12-7 14 0z" fill="#2e2e33" /></g>} />} />
      <TaskItem icon={<ChromeMark badge={<g><circle cx="36" cy="13" r="12" fill="#7a50b8" /><rect x="33" y="8" width="6" height="9" rx="2" fill="none" stroke="#e0c8ff" strokeWidth="2" /></g>} />} />
      <TaskItem icon={<ChromeMark badge={<g><circle cx="36" cy="13" r="12" fill="#1d1d20" /><path d="M29 16c3-8 9-8 13 0z" fill="#76553f" /></g>} />} />
      <TaskItem icon={<ChromeMark badge={<g><circle cx="36" cy="13" r="12" fill="#dcc9cf" /><circle cx="36" cy="10" r="5" fill="#7a5145" /><path d="M28 22c2-8 14-8 16 0z" fill="#fff" /></g>} />} />
      <TaskItem icon={<span className="relative flex size-5 items-center justify-center"><span className="absolute h-3 w-[10px] rounded-sm bg-white" /><SiBrave className="relative size-5 text-[#fb4a22]" /></span>} />
      <TaskItem icon={<ChromeMark badge={<g><circle cx="36" cy="13" r="12" fill="#2e6b1f" /><path d="M40 9c-3-3-8-1-8 4s5 7 8 4" fill="none" stroke="#cfe8c4" strokeWidth="2" /></g>} />} />
      <TaskItem label="211225.as @ shribe" width="w-[164px]" running icon={<EdgeMark badge={<g><circle cx="6" cy="18" r="5.500" fill="#5b5a8f" /><circle cx="6" cy="18" r="3" fill="#fff" /><circle cx="6" cy="18" r="1.300" fill="#333" /></g>} />} />
      <TaskItem icon={<EdgeMark badge={<g><circle cx="6" cy="18" r="5.500" fill="#e3a850" /><path d="M3 15h6v6H3z" fill="#55b8a6" /></g>} />} />
      <TaskItem label="Simplenote - C" width="w-[147px]" running icon={<svg viewBox="0 0 20 20" className="size-5 shrink-0"><defs><linearGradient id="opera"><stop stopColor="#3f8f70" /><stop offset="1" stopColor="#24403e" /></linearGradient></defs><path fillRule="evenodd" d="M10 0a10 10 0 1 1 0 20 10 10 0 0 1 0-20zm0 3C4 3 4 17 10 17S16 3 10 3z" fill="url(#opera)" /></svg>} />
      <TaskItem icon={<CopilotMark className="size-5" />} />
      <TaskItem label="Advanced Data S" width="w-[162px]" running icon={<EdgeMark badge={<g><circle cx="6" cy="18" r="5.500" fill="#a9a4a2" /><circle cx="6" cy="17" r="2.500" fill="#5e4438" /></g>} />} />
      <TaskItem icon={<svg viewBox="0 0 20 20" className="size-5"><path d="M2 1h13l2 2v16H2z" fill="#f4f7e8" /><path d="M2 10h15v9H2z" fill="#9fd42a" /><path d="M5 6v7M7 6v7M9 9v3M11 9v3" stroke="#222" strokeWidth="1.300" /><path d="M18.500 1 12 12" stroke="#e98b25" strokeWidth="2.500" /></svg>} />
      <TaskItem label="PowerPoint Presentation" width="w-[158px]" active icon={<CometMark className="size-5 shrink-0" fill="url(#comet)" />} />
      <div className="mr-6 ml-auto flex items-center text-[15px]">
        <button aria-label="Hidden icons"><svg viewBox="0 0 14 9" className="h-[9px] w-[14px]" fill="none" stroke="#fff" strokeWidth="2"><path d="m1 8 6-6 6 6" /></svg></button>
        <span className="ml-[22px] text-lg text-[#17913c]">67</span>
        <span className="ml-6 text-center leading-5">ENG<br />IN</span>
        <div className="ml-[22px] flex items-center gap-[10px]">
          <svg viewBox="0 0 20 16" className="h-4 w-5" fill="none" stroke="#fff" strokeWidth="1.700"><path d="M1 6c5-6 13-6 18 0M4 9c3.500-4 8.500-4 12 0M7 12c2-2 4-2 6 0" /><circle cx="10" cy="14" r="1" fill="#fff" /></svg>
          <svg viewBox="0 0 20 18" className="h-[18px] w-5" fill="none" stroke="#fff" strokeWidth="1.500"><path d="M1 6h3l5-4v14l-5-4H1zM12 6c1.500 2 1.500 4 0 6M14.500 3.500c3 3.500 3 7.500 0 11" /><path d="M17 1.500c4 5 4 10 0 15" stroke="#666" /></svg>
          <svg viewBox="0 0 20 18" className="h-[18px] w-5" fill="none" stroke="#fff" strokeWidth="1.600"><rect x="1.500" y="5" width="15.500" height="11" rx="2.500" /><path d="M18 8.500h1.500v4H18" /><path d="M8 7.500h4v6H4v-3z" fill="#fff" stroke="none" /><path d="M5 0 1 7h3l-1 5 5-7H5z" fill="#fff" stroke="#272222" strokeWidth=".6" /></svg>
        </div>
        <time className="ml-5 text-right leading-5">23:25:22<br />21-12-2025</time>
      </div>
    </footer>
  );
}

export default function App() {
  return (
    <div className={clsx("flex h-screen flex-col overflow-hidden bg-[#191b1a] text-sm", UI)}>
      <TabStrip />
      <main className="mx-[5px] mb-[5px] flex min-h-0 flex-1 flex-col overflow-hidden rounded-xl border border-[#3b3d3d] bg-[#202222]">
        <AddressBar />
        <BookmarkBar />
        <div className="flex min-h-0 flex-1">
          <div className="flex min-w-0 flex-1 flex-col">
            <PdfToolbar />
            <div className="flex min-h-0 flex-1 bg-[#282828]">
              <Slides />
              <Scrollbar />
            </div>
          </div>
          <AssistantPanel />
        </div>
      </main>
      <Taskbar />
    </div>
  );
}
